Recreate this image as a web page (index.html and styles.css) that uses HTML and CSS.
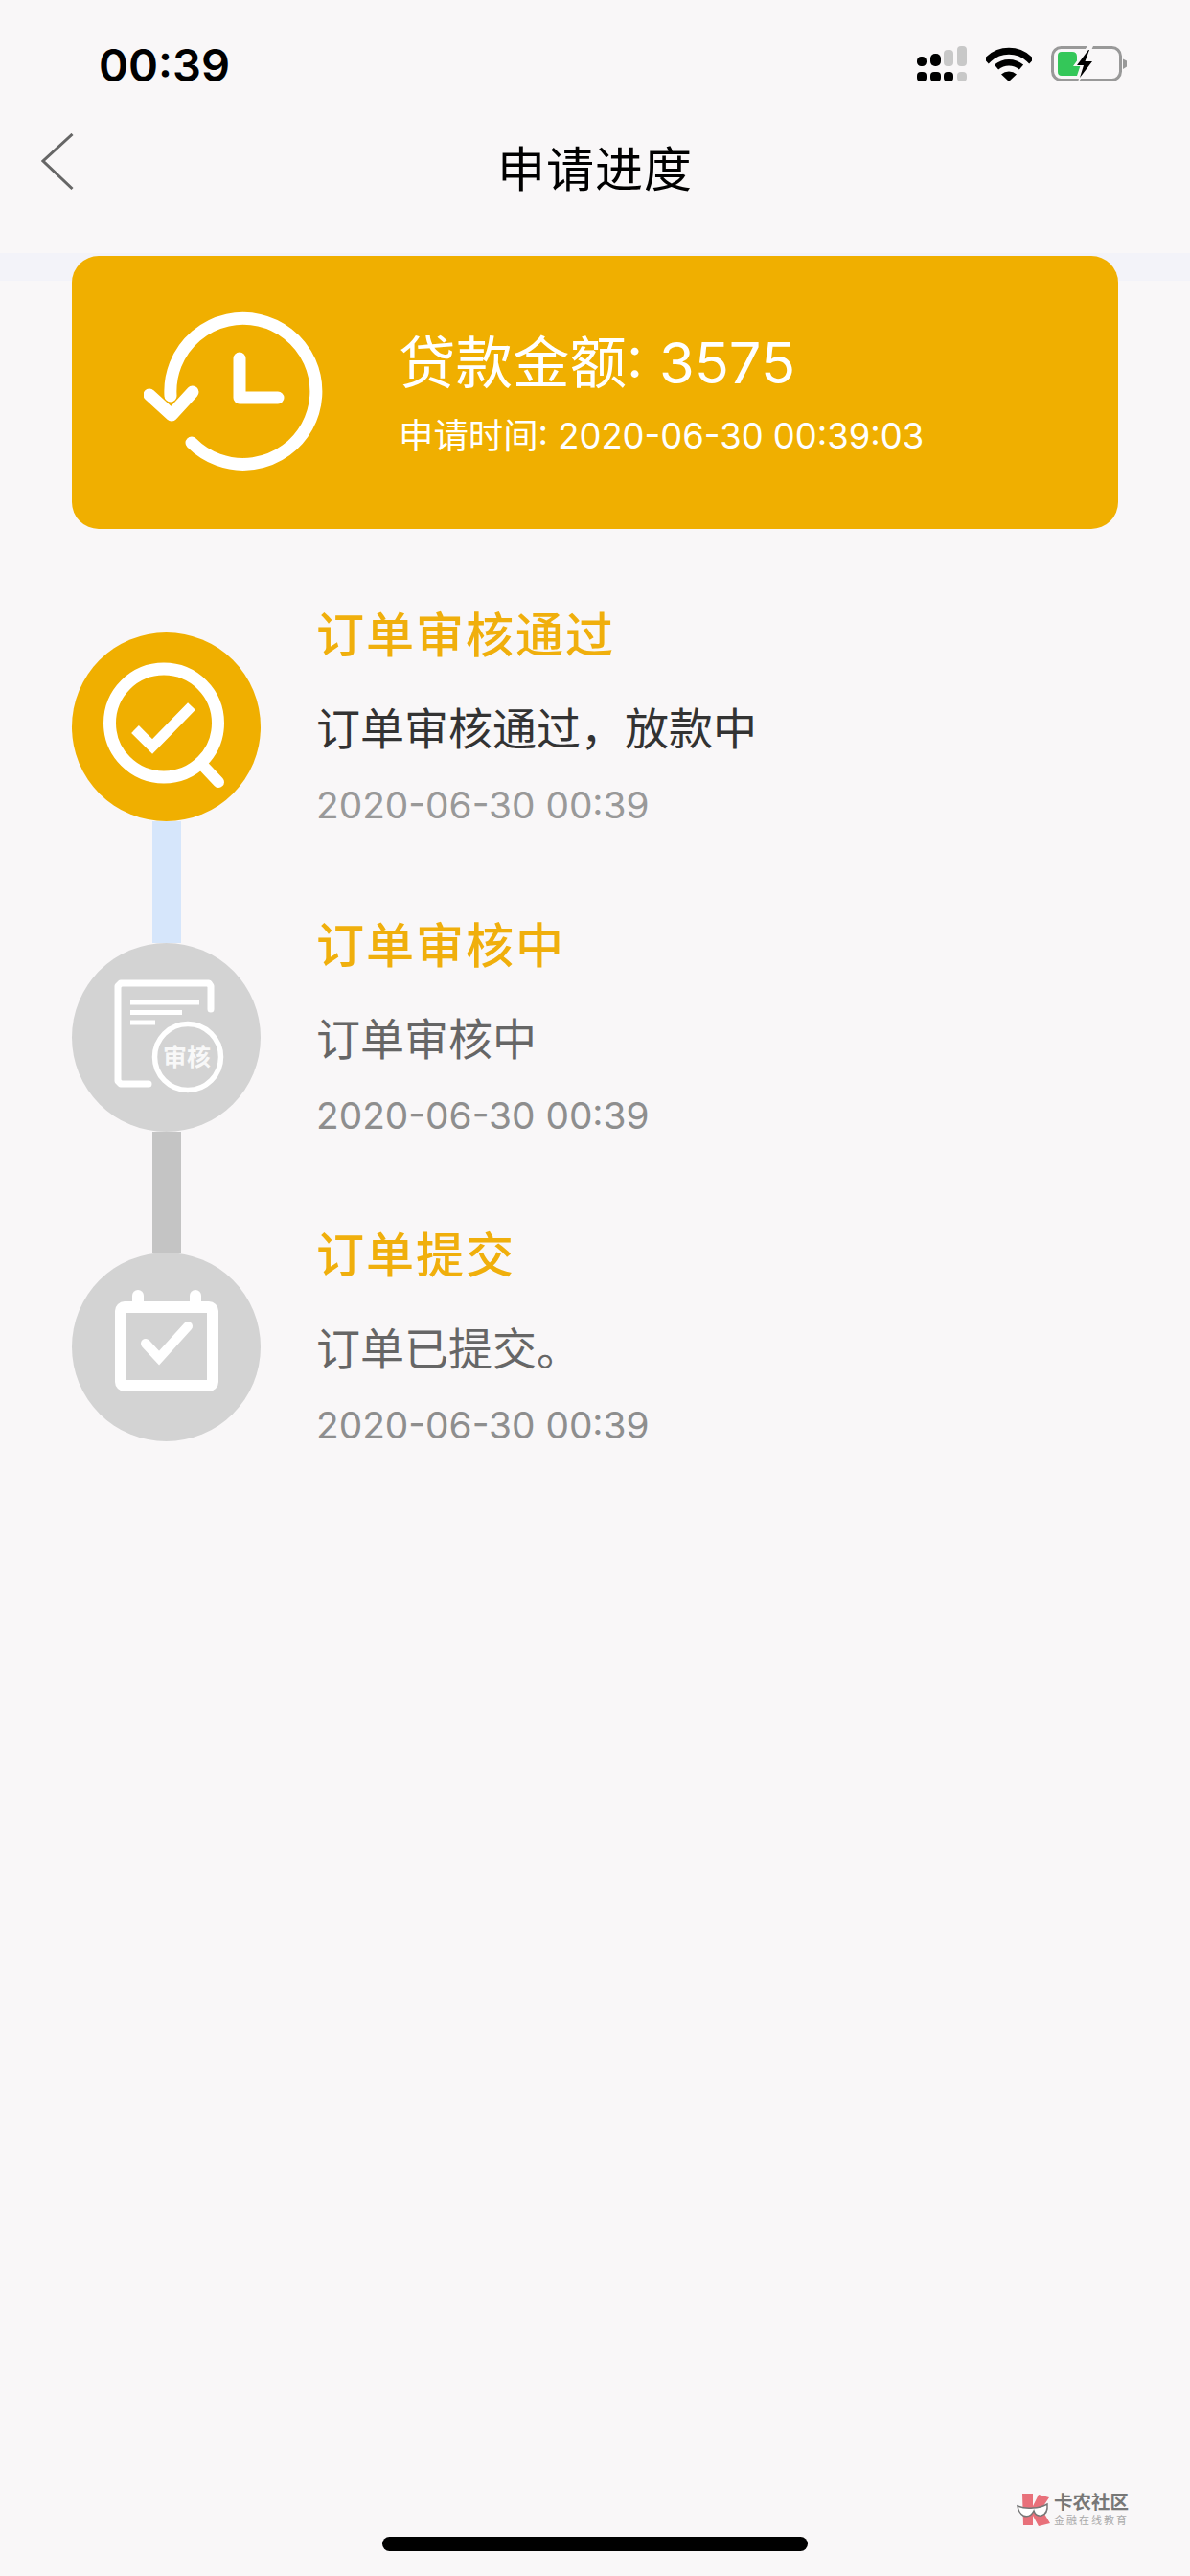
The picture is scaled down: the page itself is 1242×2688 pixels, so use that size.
FILE: index.html
```html
<!DOCTYPE html>
<html lang="zh-CN">
<head>
<meta charset="utf-8">
<title>申请进度</title>
<link rel="stylesheet" href="styles.css">
</head>
<body>
<div class="page">
  <header class="status">
    <span class="clock">00:39</span>
    <div class="status-icons">
      <svg class="signal" width="52" height="38" viewBox="0 0 52 38">
        <g fill="#000">
          <rect x="0" y="11" width="10" height="10" rx="4.500"/>
          <rect x="14" y="8" width="11" height="13" rx="5"/>
          <rect x="0" y="27" width="10" height="10" rx="4"/>
          <rect x="14" y="27" width="11" height="10" rx="4"/>
          <rect x="28" y="27" width="10" height="10" rx="4"/>
        </g>
        <g fill="#c8c8c8">
          <rect x="28" y="4" width="10" height="17" rx="4"/>
          <rect x="42" y="0" width="10" height="21" rx="4"/>
          <rect x="42" y="27" width="10" height="10" rx="4"/>
        </g>
      </svg>
      <svg class="wifi" width="48" height="38" viewBox="0 0 48 38">
        <path d="M3 13.500A31 31 0 0 1 45 13.500" fill="none" stroke="#000" stroke-width="7" stroke-linecap="square"/>
        <path d="M11 22A20 20 0 0 1 37 22" fill="none" stroke="#000" stroke-width="6.500"/>
        <path d="M16 29.500A12 12 0 0 1 32 29.500L24 37Z" fill="#000"/>
      </svg>
      <svg class="battery" width="80" height="38" viewBox="0 0 80 38">
        <rect x="1.500" y="1.500" width="71" height="34" rx="9" fill="none" stroke="#999" stroke-width="3"/>
        <path d="M75 13.500L79 15.500V21.500L75 24Z" fill="#999"/>
        <path d="M11 6H22Q27 6 27 11V19H31L27 31H11Q7 31 7 27V10Q7 6 11 6Z" fill="#34c759"/>
        <path d="M38 0L23 21H32L28 38L46 15H37L44 0Z" fill="#f9f7f8"/>
        <path d="M39 4L27 20H34L30 33L43 16H35.500L40 4Z" fill="#000"/>
      </svg>
    </div>
  </header>

  <nav class="navbar">
    <svg class="back" width="34" height="60" viewBox="0 0 34 60">
      <polyline points="32.500,1 2,29 32.500,58" fill="none" stroke="#666" stroke-width="3"/>
    </svg>
    <h1 class="nav-title">申请进度</h1>
  </nav>

  <section class="summary">
    <div class="card">
      <svg class="card-icon" width="192" height="170" viewBox="0 0 192 170">
        <g fill="none" stroke="#fff" stroke-width="13" stroke-linecap="round" stroke-linejoin="round">
          <path d="M28 89A76 76 0 1 1 50 138"/>
          <polyline points="6,88 29,109 51,85"/>
          <polyline points="100,50 100,91 140,91"/>
        </g>
      </svg>
      <div class="card-text">
        <div class="amount">贷款金额: 3575</div>
        <div class="apply-time">申请时间: 2020-06-30 00:39:03</div>
      </div>
    </div>
  </section>

  <ol class="timeline">
    <li class="step">
      <div class="rail">
        <div class="dot dot-active">
          <svg width="197" height="197" viewBox="0 0 197 197">
            <g fill="none" stroke="#fff">
              <circle cx="96" cy="94.500" r="56.500" stroke-width="13"/>
              <line x1="137" y1="139" x2="153" y2="156" stroke-width="12" stroke-linecap="round"/>
              <polyline points="66,101 84,119 125,77" stroke-width="11"/>
            </g>
          </svg>
        </div>
        <div class="link link-blue"></div>
      </div>
      <div class="step-text">
        <div class="step-title">订单审核通过</div>
        <div class="step-desc desc-dark">订单审核通过，放款中</div>
        <div class="step-date date-light">2020-06-30 00:39</div>
      </div>
    </li>
    <li class="step">
      <div class="rail">
        <div class="dot">
          <svg width="197" height="197" viewBox="0 0 197 197">
            <g fill="none" stroke="#fff">
              <polyline points="145,69 145,45 143,42 51,42 48,45 48,144 51,147 80,147" stroke-width="7" stroke-linecap="round" stroke-linejoin="round"/>
              <line x1="61" y1="62" x2="133" y2="62" stroke-width="5"/>
              <line x1="61" y1="72.500" x2="115" y2="72.500" stroke-width="5"/>
              <line x1="61" y1="83" x2="87" y2="83" stroke-width="5"/>
              <circle cx="121" cy="119" r="34.500" stroke-width="5.500"/>
            </g>
            <text class="badge-text" x="120" y="128">审核</text>
          </svg>
        </div>
        <div class="link link-grey"></div>
      </div>
      <div class="step-text">
        <div class="step-title">订单审核中</div>
        <div class="step-desc">订单审核中</div>
        <div class="step-date">2020-06-30 00:39</div>
      </div>
    </li>
    <li class="step">
      <div class="rail">
        <div class="dot">
          <svg width="197" height="197" viewBox="0 0 197 197">
            <g fill="none" stroke="#fff" stroke-width="12">
              <rect x="51" y="57" width="96" height="82" rx="4"/>
              <line x1="69" y1="45" x2="69" y2="57" stroke-linecap="round"/>
              <line x1="129" y1="45" x2="129" y2="57" stroke-linecap="round"/>
              <polyline points="77,95 91,110 121,77" stroke-width="10" stroke-linecap="round"/>
            </g>
          </svg>
        </div>
      </div>
      <div class="step-text">
        <div class="step-title">订单提交</div>
        <div class="step-desc">订单已提交。</div>
        <div class="step-date">2020-06-30 00:39</div>
      </div>
    </li>
  </ol>

  <div class="watermark">
    <svg width="36" height="36" viewBox="0 0 36 36">
      <path d="M6 1H17V14L23 2L34 5L26 17L35 32L23 35L17 24V34L7 34Z" fill="#e8707a"/>
      <path d="M1 14Q9 17 17 16Q25 16 32 12Q33 22 26 24Q20 25 18 19Q14 27 7 24Q2 21 1 14Z" fill="#fff" stroke="#777" stroke-width="1.500"/>
    </svg>
    <div class="wm-text">
      <div class="wm-name">卡农社区</div>
      <div class="wm-sub">金融在线教育</div>
    </div>
  </div>

  <div class="home-bar"></div>
</div>
</body>
</html>
```
FILE: styles.css
```css
* { box-sizing: border-box; }
html, body { margin: 0; padding: 0; }
body {
  background: #f9f7f8;
  font-family: "Inter", "Noto Sans CJK SC", sans-serif;
  color: #000;
}
.page {
  position: relative;
  width: 1242px;
  height: 2688px;
  display: flex;
  flex-direction: column;
  overflow: hidden;
}
.status {
  height: 132px;
  padding: 48px 65px 0 103px;
  display: flex;
  justify-content: space-between;
  align-items: flex-start;
}
.clock {
  font-size: 47px;
  font-weight: 600;
  line-height: 42px;
  margin-top: -1px;
}
.status-icons {
  display: flex;
  align-items: center;
  gap: 20px;
}
.status-icons svg { display: block; }
.navbar {
  height: 132px;
  padding: 7px 0 0 43px;
  position: relative;
  display: flex;
  align-items: flex-start;
}
.back { display: block; }
.nav-title {
  position: absolute;
  left: 0;
  right: 0;
  top: 9px;
  margin: 0;
  font-size: 50px;
  line-height: 72px;
  font-weight: 400;
  letter-spacing: 1px;
  text-align: center;
}
.summary {
  padding: 3px 75px 0;
  background: linear-gradient(#f3f3f9 29px, transparent 29px);
}
.card {
  height: 285px;
  border-radius: 28px;
  background: #f0af00;
  color: #fff;
  display: flex;
  align-items: flex-start;
  padding: 57px 0 0 75px;
}
.card-icon { display: block; flex: none; }
.card-text { margin-left: 74px; }
.amount {
  font-size: 59.500px;
  line-height: 70px;
  margin-top: 19px;
}
.apply-time {
  font-size: 36.400px;
  line-height: 50px;
  margin-top: 17px;
}
.timeline {
  list-style: none;
  margin: 108px 0 0;
  padding: 0 0 0 75px;
}
.step {
  display: flex;
  align-items: flex-start;
  height: 323.500px;
}
.rail {
  width: 197px;
  flex: none;
  display: flex;
  flex-direction: column;
  align-items: center;
}
.dot {
  width: 197px;
  height: 197px;
  border-radius: 50%;
  background: #d3d3d3;
}
.dot svg { display: block; }
.dot-active { background: #f0af00; }
.link {
  width: 30px;
  height: 126.500px;
  margin-left: 1px;
}
.link-blue { background: #d6e6fb; }
.link-grey { background: #c4c4c4; }
.step-text {
  margin: -30px 0 0 58px;
}
.step-title {
  font-size: 50px;
  line-height: 66px;
  font-weight: 500;
  color: #f0af0c;
  letter-spacing: 2px;
}
.step-desc {
  font-size: 46px;
  line-height: 66px;
  margin-top: 31px;
  color: #666;
}
.desc-dark { color: #333; }
.step-date {
  font-size: 38.800px;
  line-height: 46px;
  margin-top: 24px;
  color: #8e8e8e;
}
.date-light { color: #999; }
.badge-text {
  font-size: 25px;
  font-weight: 700;
  fill: #fff;
  fill-opacity: 0.85;
  text-anchor: middle;
}
.watermark {
  position: absolute;
  left: 1061px;
  top: 2601px;
  display: flex;
  gap: 3px;
}
.watermark svg { display: block; }
.wm-name {
  font-size: 19.500px;
  line-height: 20px;
  font-weight: 700;
  color: #777;
  white-space: nowrap;
}
.wm-sub {
  font-size: 11px;
  line-height: 14px;
  margin-top: 2px;
  letter-spacing: 2px;
  color: #aaa;
  white-space: nowrap;
}
.home-bar {
  position: absolute;
  left: 399px;
  bottom: 26px;
  width: 444px;
  height: 15px;
  border-radius: 8px;
  background: #000;
}
```
